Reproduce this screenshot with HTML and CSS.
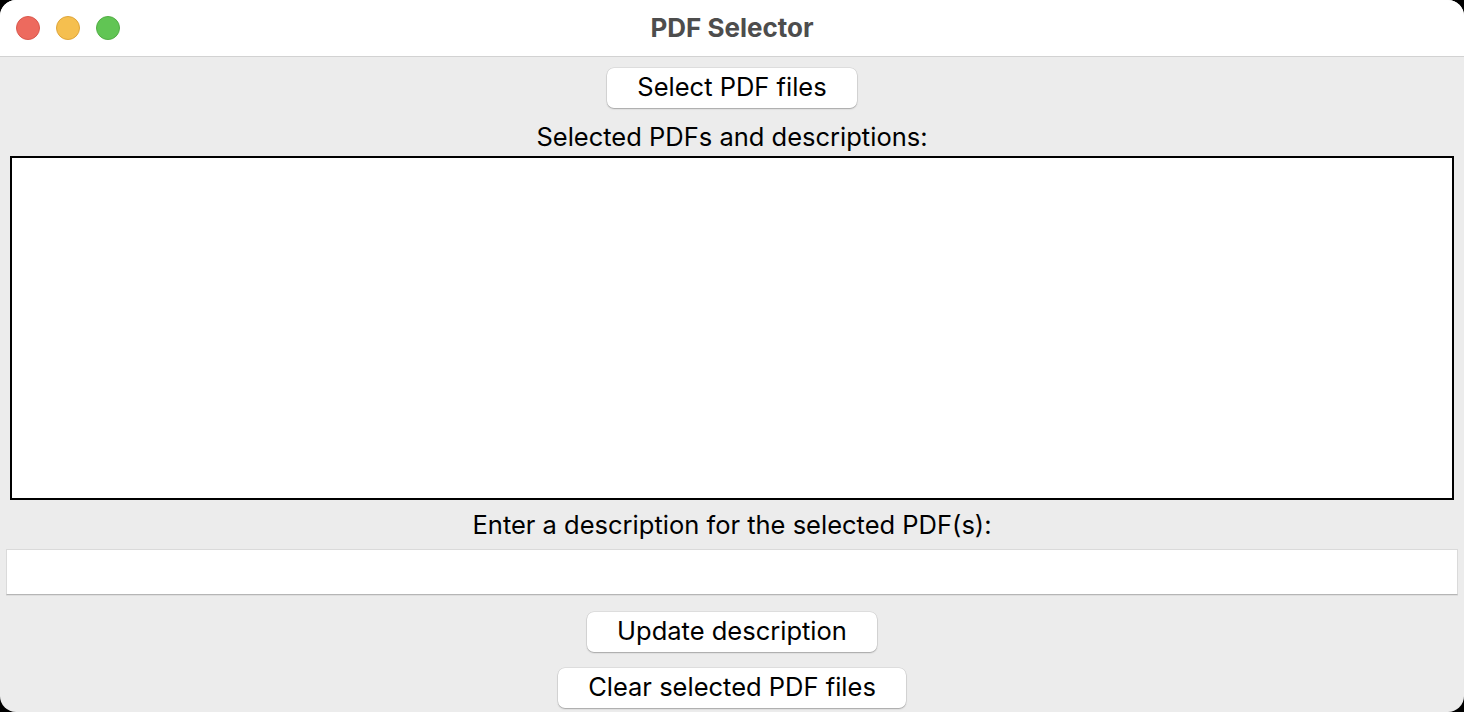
FILE: index.html
```html
<!DOCTYPE html>
<html lang="en">
<head>
<meta charset="utf-8">
<title>PDF Selector</title>
<link rel="stylesheet" href="styles.css">
</head>
<body>
<div class="window">
  <header class="titlebar">
    <div class="lights">
      <span class="light red"></span>
      <span class="light yellow"></span>
      <span class="light green"></span>
    </div>
    <div class="title">PDF Selector</div>
  </header>
  <main class="content">
    <button class="btn">Select PDF files</button>
    <div class="label label-top">Selected PDFs and descriptions:</div>
    <div class="listbox"></div>
    <div class="label label-mid">Enter a description for the selected PDF(s):</div>
    <input class="entry" type="text">
    <button class="btn btn-update">Update description</button>
    <button class="btn btn-clear">Clear selected PDF files</button>
  </main>
</div>
</body>
</html>
```

FILE: styles.css
```css
* { box-sizing: border-box; }
html, body {
  margin: 0;
  padding: 0;
  background: #000;
  width: 1464px;
  height: 712px;
  overflow: hidden;
}
body {
  font-family: "Inter", "Liberation Sans", sans-serif;
  color: #000;
}
.window {
  width: 1464px;
  height: 712px;
  border-radius: 16px;
  overflow: hidden;
  background: #ececec;
  display: flex;
  flex-direction: column;
}
.titlebar {
  height: 57px;
  background: #fff;
  border-bottom: 1px solid #d2d2d2;
  position: relative;
  display: flex;
  align-items: center;
  justify-content: center;
  flex: none;
}
.lights {
  position: absolute;
  left: 16px;
  top: 16px;
  display: flex;
  gap: 16px;
}
.light {
  width: 24px;
  height: 24px;
  border-radius: 50%;
  display: block;
}
.red { background: #ed6a5e; border: 1px solid #d9584d; }
.yellow { background: #f5bf4f; border: 1px solid #dea53a; }
.green { background: #61c554; border: 1px solid #52ad45; }
.title {
  font-size: 26px;
  font-weight: 700;
  color: #4d4d4d;
  margin-top: -2px;
}
.content {
  flex: 1;
  display: flex;
  flex-direction: column;
  align-items: center;
  padding-top: 11px;
}
.btn {
  font-family: inherit;
  font-size: 25.5px;
  line-height: 30px;
  color: #000;
  background: #fff;
  border: none;
  border-radius: 7px;
  height: 40px;
  padding: 0 30px 3px;
  box-shadow: 0 0 0 0.5px rgba(0,0,0,0.12), 0 1px 1.5px rgba(0,0,0,0.25);
  flex: none;
}
.btn-update { margin-top: 17px; }
.btn-clear { margin-top: 16px; }
.label {
  font-size: 25.5px;
  line-height: 30px;
  text-align: center;
}
.label-top { padding: 14px 0 4px; }
.label-mid { padding: 10px 0 9px; }
.listbox {
  align-self: stretch;
  margin: 0 10px;
  height: 344px;
  background: #fff;
  border: 2px solid #000;
  flex: none;
}
.entry {
  align-self: stretch;
  margin: 0 6px;
  height: 46px;
  background: #fff;
  border: 1px solid #dadada;
  border-bottom: 1px solid #b5b5b5;
  box-shadow: 0 1px 0 rgba(0,0,0,0.06);
  outline: none;
  flex: none;
}
```
